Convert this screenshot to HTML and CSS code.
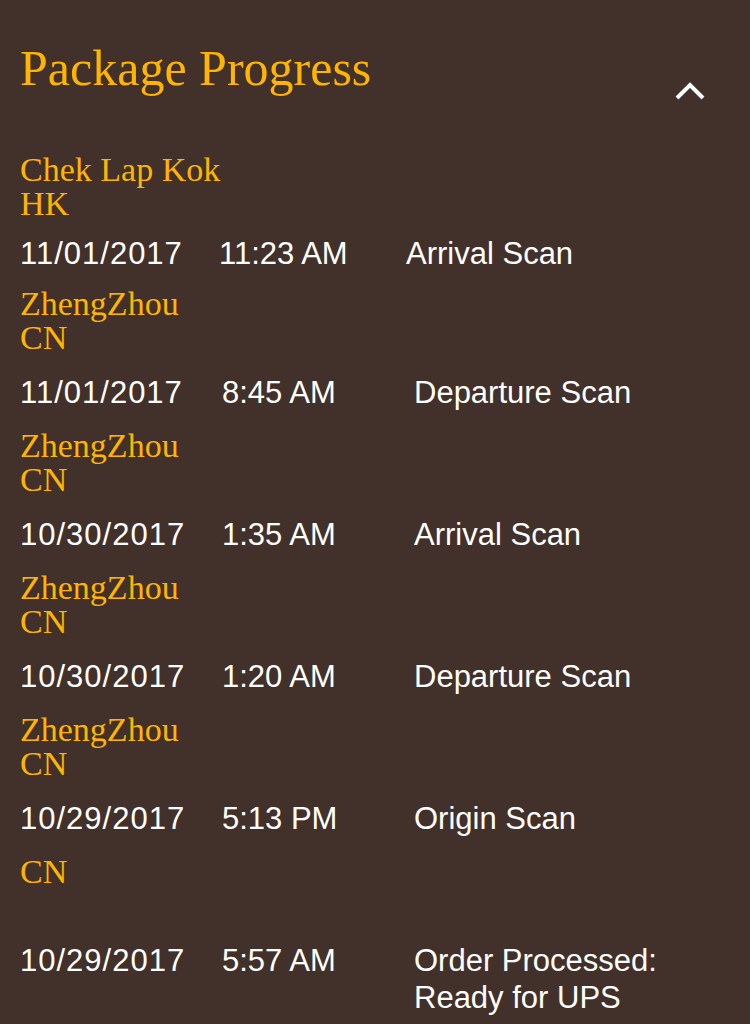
FILE: index.html
```html
<!DOCTYPE html>
<html lang="en">
<head>
    <meta charset="UTF-8">
    <meta name="viewport" content="width=device-width, initial-scale=1.0">
    <title>Package Progress</title>
    <link rel="stylesheet" href="styles.css">
</head>
<body>
    <div id="progress">
        <div class="header">
            <h1>Package Progress</h1>
            <button class="toggle" aria-label="Collapse">
                <svg width="32" height="20" viewBox="0 0 32 20">
                    <polyline points="3,17 16,4 29,17" fill="none" stroke="#ffffff" stroke-width="4"/>
                </svg>
            </button>
        </div>

        <div class="activity first">
            <div class="location"><div>Chek Lap Kok</div><div>HK</div></div>
            <div class="scan"><span>11/01/2017</span><span>11:23 AM</span><span>Arrival Scan</span></div>
        </div>
        <div class="activity">
            <div class="location"><div>ZhengZhou</div><div>CN</div></div>
            <div class="scan"><span>11/01/2017</span><span>8:45 AM</span><span>Departure Scan</span></div>
        </div>
        <div class="activity">
            <div class="location"><div>ZhengZhou</div><div>CN</div></div>
            <div class="scan"><span>10/30/2017</span><span>1:35 AM</span><span>Arrival Scan</span></div>
        </div>
        <div class="activity">
            <div class="location"><div>ZhengZhou</div><div>CN</div></div>
            <div class="scan"><span>10/30/2017</span><span>1:20 AM</span><span>Departure Scan</span></div>
        </div>
        <div class="activity">
            <div class="location"><div>ZhengZhou</div><div>CN</div></div>
            <div class="scan"><span>10/29/2017</span><span>5:13 PM</span><span>Origin Scan</span></div>
        </div>
        <div class="activity">
            <div class="location"><div>CN</div><div>&nbsp;</div></div>
            <div class="scan"><span>10/29/2017</span><span>5:57 AM</span><span>Order Processed: Ready for UPS</span></div>
        </div>
    </div>
</body>
</html>
```

FILE: styles.css
```css
body {
    margin: 0;
    background-color: #42312a; /* marron oscuro */
    color: #ffffff;
    font-family: "Liberation Sans", Arial, sans-serif;
}

#progress {
    padding: 40px 20px 0 20px;
}

.header {
    display: flex;
    justify-content: space-between;
    align-items: flex-start;
    margin-bottom: 52px;
}

h1 {
    margin: 0;
    font-family: "Liberation Serif", "Times New Roman", serif;
    font-weight: normal;
    font-size: 50px;
    line-height: 56px;
    color: #ffb500; /* amarillo */
}

.toggle {
    margin: 41px 24px 0 0;
    padding: 0;
    border: none;
    background: none;
    line-height: 0;
}

.location {
    font-family: "Liberation Serif", "Times New Roman", serif;
    font-size: 34px;
    line-height: 34px;
    color: #ffb500;
}

.scan {
    display: grid;
    grid-template-columns: 202px 192px 1fr;
    margin: 19px 0 18px 0;
    font-size: 31px;
    line-height: 37px;
}

.scan span:first-child {
    letter-spacing: 1px;
}

.first .scan {
    grid-template-columns: 199px 187px 1fr;
    margin: 14px 0 15px 0;
}
```
